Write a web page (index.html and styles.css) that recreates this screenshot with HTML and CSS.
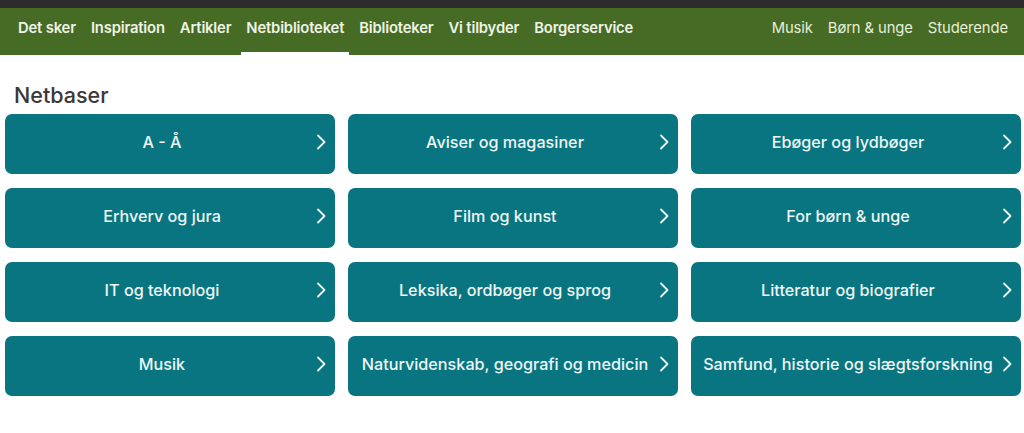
FILE: index.html
```html
<!DOCTYPE html>
<html lang="da">
<head>
<meta charset="utf-8">
<link rel="stylesheet" href="styles.css">
</head>
<body>
<div class="topbar"></div>
<nav class="nav">
  <ul class="nav-main">
    <li><a href="#">Det sker</a></li>
    <li><a href="#">Inspiration</a></li>
    <li><a href="#">Artikler</a></li>
    <li class="active"><a href="#">Netbiblioteket</a></li>
    <li><a href="#">Biblioteker</a></li>
    <li><a href="#">Vi tilbyder</a></li>
    <li><a href="#">Borgerservice</a></li>
  </ul>
  <ul class="nav-side">
    <li><a href="#">Musik</a></li>
    <li><a href="#">Børn &amp; unge</a></li>
    <li><a href="#">Studerende</a></li>
  </ul>
</nav>
<main class="content">
  <h2 class="title">Netbaser</h2>
  <div class="grid">
    <a class="tile" href="#"><span>A - Å</span><svg class="chev" viewBox="0 0 10 16"><path d="M2 1.5 L8.5 8 L2 14.5"/></svg></a>
    <a class="tile" href="#"><span>Aviser og magasiner</span><svg class="chev" viewBox="0 0 10 16"><path d="M2 1.5 L8.5 8 L2 14.5"/></svg></a>
    <a class="tile" href="#"><span>Ebøger og lydbøger</span><svg class="chev" viewBox="0 0 10 16"><path d="M2 1.5 L8.5 8 L2 14.5"/></svg></a>
    <a class="tile" href="#"><span>Erhverv og jura</span><svg class="chev" viewBox="0 0 10 16"><path d="M2 1.5 L8.5 8 L2 14.5"/></svg></a>
    <a class="tile" href="#"><span>Film og kunst</span><svg class="chev" viewBox="0 0 10 16"><path d="M2 1.5 L8.5 8 L2 14.5"/></svg></a>
    <a class="tile" href="#"><span>For børn &amp; unge</span><svg class="chev" viewBox="0 0 10 16"><path d="M2 1.5 L8.5 8 L2 14.5"/></svg></a>
    <a class="tile" href="#"><span>IT og teknologi</span><svg class="chev" viewBox="0 0 10 16"><path d="M2 1.5 L8.5 8 L2 14.5"/></svg></a>
    <a class="tile" href="#"><span>Leksika, ordbøger og sprog</span><svg class="chev" viewBox="0 0 10 16"><path d="M2 1.5 L8.5 8 L2 14.5"/></svg></a>
    <a class="tile" href="#"><span>Litteratur og biografier</span><svg class="chev" viewBox="0 0 10 16"><path d="M2 1.5 L8.5 8 L2 14.5"/></svg></a>
    <a class="tile" href="#"><span>Musik</span><svg class="chev" viewBox="0 0 10 16"><path d="M2 1.5 L8.5 8 L2 14.5"/></svg></a>
    <a class="tile" href="#"><span>Naturvidenskab, geografi og medicin</span><svg class="chev" viewBox="0 0 10 16"><path d="M2 1.5 L8.5 8 L2 14.5"/></svg></a>
    <a class="tile" href="#"><span>Samfund, historie og slægtsforskning</span><svg class="chev" viewBox="0 0 10 16"><path d="M2 1.5 L8.5 8 L2 14.5"/></svg></a>
  </div>
</main>
</body>
</html>
```

FILE: styles.css
```css
* { box-sizing: border-box; }
html, body { margin: 0; padding: 0; background: #fff; }
body { font-family: Inter, "Noto Sans", sans-serif; color: #333; }

.topbar { height: 8px; background: #2e2b2c; }

.nav {
  display: flex;
  justify-content: space-between;
  background: #466b24;
  height: 47px;
  padding: 0 11px 0 13px;
}
.nav ul { list-style: none; margin: 0; padding: 0; display: flex; }
.nav li { display: flex; }
.nav a {
  display: flex;
  align-items: center;
  color: #eef3e6;
  text-decoration: none;
  font-size: 14.8px;
  padding: 0 5px 4px;
  border-bottom: 3px solid transparent;
}
.nav-main { gap: 5px; }
.nav-main a { font-weight: 600; letter-spacing: -0.17px; }
.nav-main .active a { border-bottom-color: #fff; }
.nav-side { gap: 5px; }
.nav-side a { font-weight: 400; color: #e6eedb; font-size: 14.8px; letter-spacing: -0.1px; }

.content { padding: 0 3px 0 5px; }
.title {
  margin: 0;
  padding: 27px 0 6px 9px;
  font-size: 21.5px;
  font-weight: 500;
  line-height: 26px;
  color: #3a3838;
}
.grid {
  display: grid;
  grid-template-columns: repeat(3, 330px);
  column-gap: 13px;
  row-gap: 14px;
}
.tile {
  position: relative;
  display: flex;
  align-items: center;
  justify-content: center;
  height: 60px;
  background: #087580;
  border-radius: 7px;
  color: #eef6f6;
  text-decoration: none;
  font-size: 16.2px;
  font-weight: 500;
  padding: 0 24px 4px 8px;
}
.tile span { flex: 1; text-align: center; }
.chev {
  width: 10px;
  height: 16px;
  flex: none;
  position: absolute;
  right: 9px;
  top: 20px;
}
.chev path { fill: none; stroke: #eef6f6; stroke-width: 1.8; stroke-linecap: round; stroke-linejoin: round; }
```
